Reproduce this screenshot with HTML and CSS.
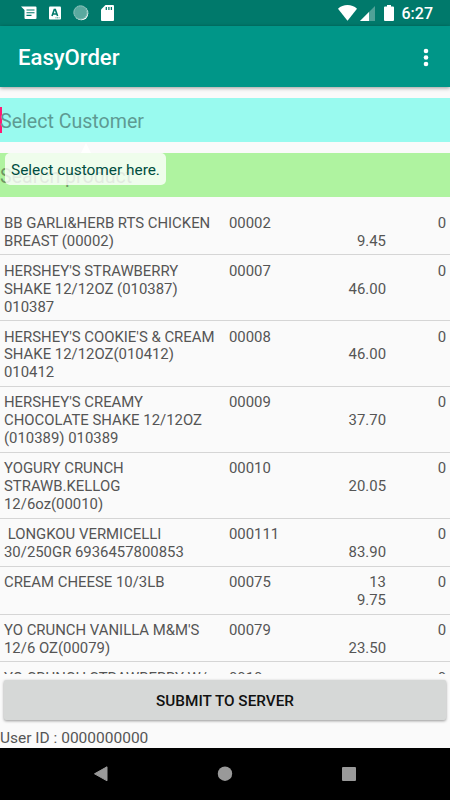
FILE: index.html
```html
<!DOCTYPE html>
<html lang="en">
<head>
  <meta charset="UTF-8" />
  <meta name="viewport" content="width=device-width, initial-scale=1.0" />
  <title>EasyOrder</title>
  <link rel="stylesheet" href="styles.css">
</head>
<body>
  <div class="app">
    <div class="status-bar">
      <div class="notifications">
        <svg width="16" height="14" viewBox="0 0 16 14">
          <path d="M0 .5H14.500a1 1 0 0 1 1 1V12a1 1 0 0 1-1 1H4.500a1 1 0 0 1-1-1V4z" fill="#fff"/>
          <path d="M5.500 4h8M5.500 6.700h8M5.500 9.400h5" stroke="#00796b" stroke-width="1.100"/>
        </svg>
        <svg width="12" height="14" viewBox="0 0 12 14">
          <rect y=".5" width="12" height="13" rx="1" fill="#fff"/>
          <path d="M3 10 5.300 3.500h1L8.600 10M4 8h3.700" fill="none" stroke="#00796b" stroke-width="1.600"/>
          <path d="M6.500 11.800h4" stroke="#00796b" stroke-width=".8" stroke-dasharray="1 .6"/>
        </svg>
        <svg width="16" height="16" viewBox="0 0 16 16">
          <circle cx="8.300" cy="8.300" r="7" fill="#fff"/>
          <circle cx="7.500" cy="7.500" r="7.200" fill="#5aa99f"/>
          <circle cx="7.500" cy="7.500" r="6.500" fill="none" stroke="#a5d0ca" stroke-width="1" stroke-dasharray="1 1"/>
        </svg>
        <svg width="13" height="16" viewBox="0 0 13 16">
          <path d="M4.500 0H12a1 1 0 0 1 1 1v14a1 1 0 0 1-1 1H1a1 1 0 0 1-1-1V4.500z" fill="#fff"/>
          <path d="M5.300 2v3M7.900 2v3M10.400 2v3" stroke="#00796b" stroke-width="1.300"/>
        </svg>
      </div>
      <div class="system">
        <svg class="wifi" width="19" height="16" viewBox="0 0 19 16">
          <path d="M0 3.800C5-1.200 14-1.200 19 3.800L9.500 15.700z" fill="#fff"/>
        </svg>
        <svg class="signal" width="15" height="15" viewBox="0 0 15 15">
          <path d="M15 0v15H0z" fill="#4fa197"/>
          <path d="M9 6v9H0z" fill="#fff"/>
        </svg>
        <svg class="battery" width="10" height="16" viewBox="0 0 10 16">
          <path d="M3 0h4v1.500h2a1 1 0 0 1 1 1V15a1 1 0 0 1-1 1H1a1 1 0 0 1-1-1V2.500a1 1 0 0 1 1-1h2z" fill="#fff"/>
        </svg>
        <span class="clock">6:27</span>
      </div>
    </div>

    <div class="toolbar">
      <h1>EasyOrder</h1>
      <svg width="6" height="19" viewBox="0 0 6 19" fill="#fff">
        <circle cx="3" cy="3" r="2.300"/>
        <circle cx="3" cy="9.500" r="2.300"/>
        <circle cx="3" cy="16" r="2.300"/>
      </svg>
    </div>

    <div class="fields">
      <div class="field customer">
        <span class="caret"></span>
        <span>Select Customer</span>
        <div class="tooltip">Select customer here.</div>
      </div>
      <div class="field product"><span>Search product</span></div>
    </div>

    <div class="list">
      <div class="row">
        <div class="name">BB GARLI&amp;HERB RTS CHICKEN<br>BREAST (00002)</div>
        <div class="code">00002</div>
        <div class="price"><br>9.45</div>
        <div class="qty">0</div>
      </div>
      <div class="row">
        <div class="name">HERSHEY'S STRAWBERRY<br>SHAKE 12/12OZ (010387)<br>010387</div>
        <div class="code">00007</div>
        <div class="price"><br>46.00</div>
        <div class="qty">0</div>
      </div>
      <div class="row">
        <div class="name">HERSHEY'S COOKIE'S &amp; CREAM<br>SHAKE 12/12OZ(010412)<br>010412</div>
        <div class="code">00008</div>
        <div class="price"><br>46.00</div>
        <div class="qty">0</div>
      </div>
      <div class="row">
        <div class="name">HERSHEY'S CREAMY<br>CHOCOLATE SHAKE 12/12OZ<br>(010389) 010389</div>
        <div class="code">00009</div>
        <div class="price"><br>37.70</div>
        <div class="qty">0</div>
      </div>
      <div class="row">
        <div class="name">YOGURY CRUNCH<br>STRAWB.KELLOG<br>12/6oz(00010)</div>
        <div class="code">00010</div>
        <div class="price"><br>20.05</div>
        <div class="qty">0</div>
      </div>
      <div class="row">
        <div class="name">&nbsp;LONGKOU VERMICELLI<br>30/250GR 6936457800853</div>
        <div class="code">000111</div>
        <div class="price"><br>83.90</div>
        <div class="qty">0</div>
      </div>
      <div class="row">
        <div class="name">CREAM CHEESE 10/3LB</div>
        <div class="code">00075</div>
        <div class="price">13<br>9.75</div>
        <div class="qty">0</div>
      </div>
      <div class="row">
        <div class="name">YO CRUNCH VANILLA M&amp;M'S<br>12/6 OZ(00079)</div>
        <div class="code">00079</div>
        <div class="price"><br>23.50</div>
        <div class="qty">0</div>
      </div>
      <div class="row">
        <div class="name">YO CRUNCH STRAWBERRY W/</div>
        <div class="code">0010</div>
        <div class="price"></div>
        <div class="qty">0</div>
      </div>
    </div>

    <button class="submit-btn">SUBMIT TO SERVER</button>
    <div class="user-id">User ID : 0000000000</div>

    <div class="nav-bar">
      <svg width="14" height="16" viewBox="0 0 14 16"><path d="M13 .8v14L.5 7.800z" fill="#999" stroke="#999" stroke-linejoin="round"/></svg>
      <svg width="16" height="16" viewBox="0 0 16 16"><circle cx="8" cy="7.700" r="7.200" fill="#999"/></svg>
      <svg width="14" height="16" viewBox="0 0 14 16"><rect y="1" width="14" height="14" rx="1" fill="#999"/></svg>
    </div>
  </div>
</body>
</html>
```
FILE: styles.css
```css
* {
  margin: 0;
  padding: 0;
  box-sizing: border-box;
}

body {
  font-family: Roboto, sans-serif;
  background-color: #fafafa;
  color: #555;
  font-size: 14.9px;
  line-height: 17.95px;
}

.app {
  display: flex;
  flex-direction: column;
  width: 450px;
  height: 800px;
  overflow: hidden;
}

.status-bar {
  display: flex;
  justify-content: space-between;
  height: 26px;
  padding: 0 17px 0 21px;
  background-color: #00796b;
}

.notifications {
  display: flex;
  align-items: center;
  gap: 12px;
}

.system {
  display: flex;
  align-items: center;
  color: #fff;
}

.signal {
  margin: 0 9px 0 3px;
}

.clock {
  margin: 2px 0 0 8px;
  font-size: 16px;
  font-weight: 500;
}

.toolbar {
  display: flex;
  align-items: center;
  justify-content: space-between;
  height: 61px;
  padding: 2px 21px 0 18px;
  background-color: #009688;
  box-shadow: 0 1px 4px rgba(0, 0, 0, 0.4);
}

h1 {
  padding-top: 1px;
  color: #fff;
  font-size: 22.1px;
  font-weight: 500;
}

.fields {
  display: flex;
  flex-direction: column;
  gap: 11px;
  padding: 11px 0 10.5px;
}

.field {
  position: relative;
  display: flex;
  align-items: center;
  height: 44px;
  padding-top: 4px;
  font-size: 19.6px;
  line-height: 24px;
}

.customer {
  z-index: 1;
  background-color: #99faef;
  color: #5e9a93;
}

.product {
  background-color: #aff3a0;
  color: #6c9663;
}

.caret {
  width: 2px;
  height: 26px;
  margin-top: -4px;
  margin-right: -2px;
  background-color: #ff1a75;
}

.tooltip {
  position: absolute;
  top: 55px;
  left: 5px;
  width: 161px;
  height: 32px;
  border-radius: 5px;
  background-color: rgba(255, 255, 255, 0.8);
  color: #004d40;
  font-size: 15.4px;
  line-height: 34px;
  text-align: center;
}

.tooltip::before {
  content: "";
  position: absolute;
  top: -10px;
  left: 76px;
  border: 5px solid transparent;
  border-top: none;
  border-bottom: 10px solid #fff;
}

.list {
  height: 466.5px;
  overflow: hidden;
}

.row {
  display: grid;
  grid-template-columns: 225px 100px 57px 60px;
  padding: 7.3px 4px 3.7px;
  border-bottom: 1px solid #d5d5d5;
}

.price,
.qty {
  text-align: right;
}

.submit-btn {
  height: 40px;
  margin: 6px 4px 0;
  padding-top: 1px;
  border: none;
  border-radius: 2px;
  background-color: #d6d8d7;
  box-shadow: 0 1px 3px rgba(0, 0, 0, 0.4);
  color: #111;
  font-family: inherit;
  font-size: 15.3px;
  font-weight: 500;
}

.user-id {
  height: 28px;
  padding-top: 10px;
  font-size: 15.5px;
}

.nav-bar {
  display: flex;
  align-items: center;
  justify-content: center;
  gap: 109px;
  height: 52px;
  background-color: #000;
}
```
